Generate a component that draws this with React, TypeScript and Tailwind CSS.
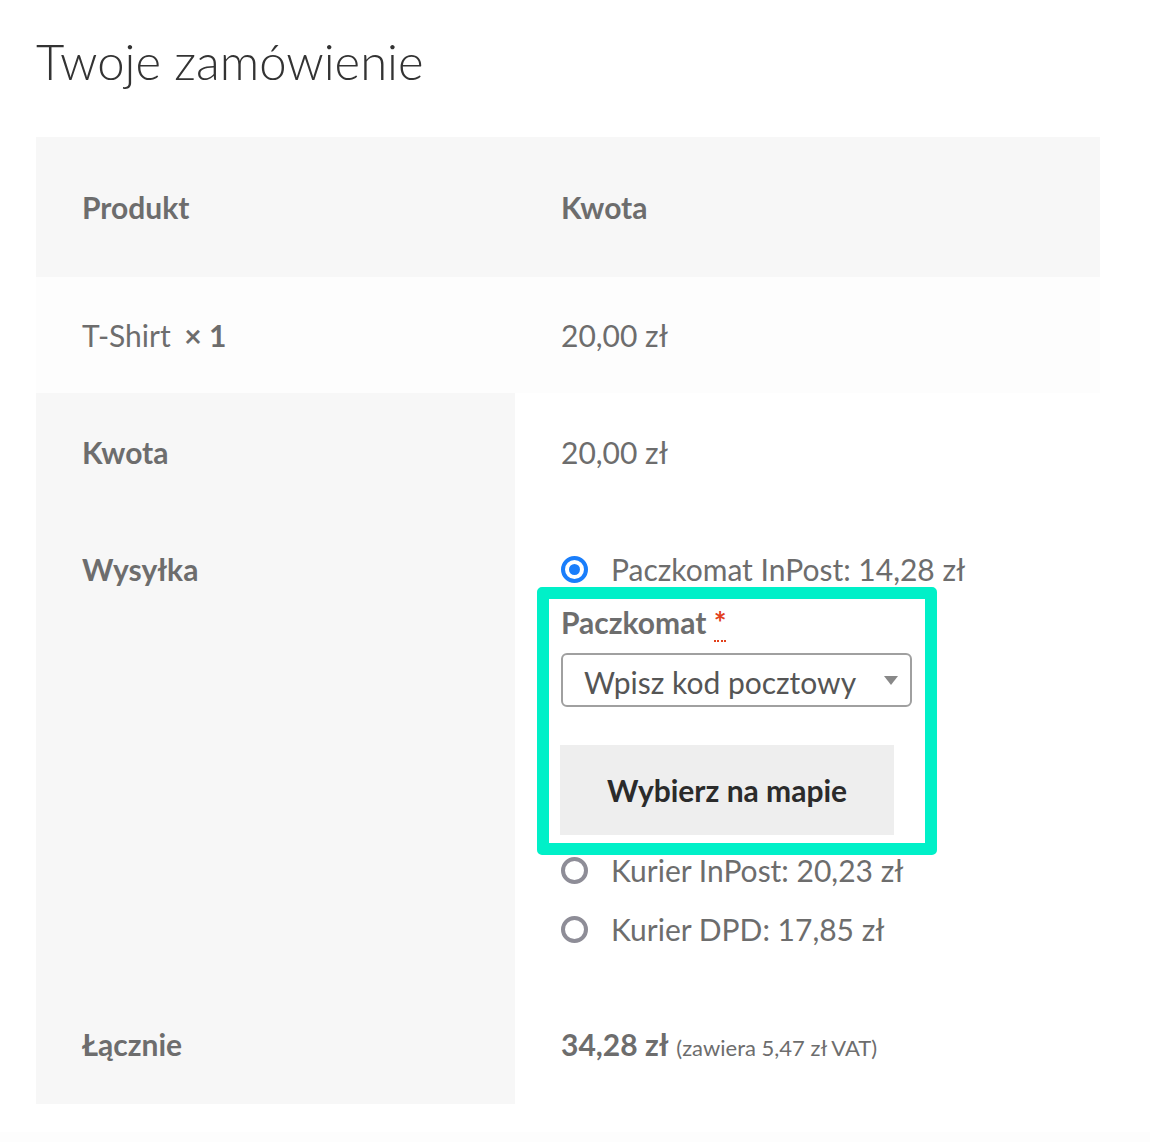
const font = { fontFamily: "Lato, 'Noto Sans', sans-serif" };

function Radio({ checked }: { checked?: boolean }) {
  return checked ? (
    <span className="flex size-[27px] shrink-0 items-center justify-center rounded-full border-[4px] border-[#1a7efb]">
      <span className="size-[11px] rounded-full bg-[#1a7efb]" />
    </span>
  ) : (
    <span className="size-[27px] shrink-0 rounded-full border-[4px] border-[#8e8d97]" />
  );
}

export default function App() {
  return (
    <div className="min-h-[1142px] bg-white text-[#6d6d6d]" style={font}>
      <div className="px-[36px] pt-[31px]">
        <h1 className="text-[49px] leading-[60px] font-light text-[#333]">Twoje zamówienie</h1>

        <div className="mt-[46px] w-[1064px] text-[30px] leading-[36px]">
          <div className="grid grid-cols-[479px_1fr] bg-[#f7f7f7] py-[52px] font-bold">
            <div className="pl-[46px]">Produkt</div>
            <div className="pl-[46px]">Kwota</div>
          </div>

          <div className="grid grid-cols-[479px_1fr] bg-[#fdfdfd] py-[40px]">
            <div className="pl-[46px]">
              T-Shirt <strong className="ml-[6px] font-bold">× 1</strong>
            </div>
            <div className="pl-[46px]">20,00 zł</div>
          </div>

          <div className="grid grid-cols-[479px_1fr]">
            <div className="bg-[#f7f7f7] pt-[41px] pb-[40px] pl-[46px] font-bold">Kwota</div>
            <div className="pt-[41px] pb-[40px] pl-[46px]">20,00 zł</div>

            <div className="bg-[#f7f7f7] pt-[41px] pl-[46px] font-bold">Wysyłka</div>
            <div className="pt-[41px] pb-[39px] pl-[46px]">
              <ul>
                <li>
                  <label className="flex items-center gap-[23px]">
                    <Radio checked />
                    <span>Paczkomat InPost: 14,28 zł</span>
                  </label>
                  <div className="-mb-[3px] -ml-[24px] w-[400px] rounded-[5px] border-[12px] border-[#00f0c8] pt-[5px] pb-[8px] pl-[12px]">
                    <div className="font-bold">
                      Paczkomat{" "}
                      <abbr className="text-[#e2401c] no-underline" title="wymagane">
                        <span className="border-b-2 border-dotted border-[#e2401c]">*</span>
                      </abbr>
                    </div>
                    <div className="mt-[13px] flex h-[54px] w-[351px] items-center justify-between rounded-[6px] border-2 border-[#a0a0a0] pr-[12px] pl-[21px] text-[#555]">
                      <span className="pt-[3px]">Wpisz kod pocztowy</span>
                      <span className="h-0 w-0 border-x-[7px] border-t-[9px] border-x-transparent border-t-[#888]" />
                    </div>
                    <button
                      type="button"
                      className="mt-[38px] -ml-px h-[90px] w-[334px] bg-[#eeeeee] font-bold text-[#2b2b2b]"
                    >
                      Wybierz na mapie
                    </button>
                  </div>
                </li>
                <li className="flex items-center gap-[23px]">
                  <Radio />
                  <span>Kurier InPost: 20,23 zł</span>
                </li>
                <li className="mt-[23px] flex items-center gap-[23px]">
                  <Radio />
                  <span>Kurier DPD: 17,85 zł</span>
                </li>
              </ul>
            </div>

            <div className="bg-[#f7f7f7] pt-[40px] pb-[38px] pl-[46px] font-bold">Łącznie</div>
            <div className="pt-[40px] pb-[38px] pl-[46px]">
              <strong className="font-bold">34,28 zł</strong>{" "}
              <small className="text-[22px]">(zawiera 5,47 zł VAT)</small>
            </div>
          </div>
        </div>
      </div>
      <div className="mt-[28px] h-[10px] bg-[#fdfdfd]" />
    </div>
  );
}
